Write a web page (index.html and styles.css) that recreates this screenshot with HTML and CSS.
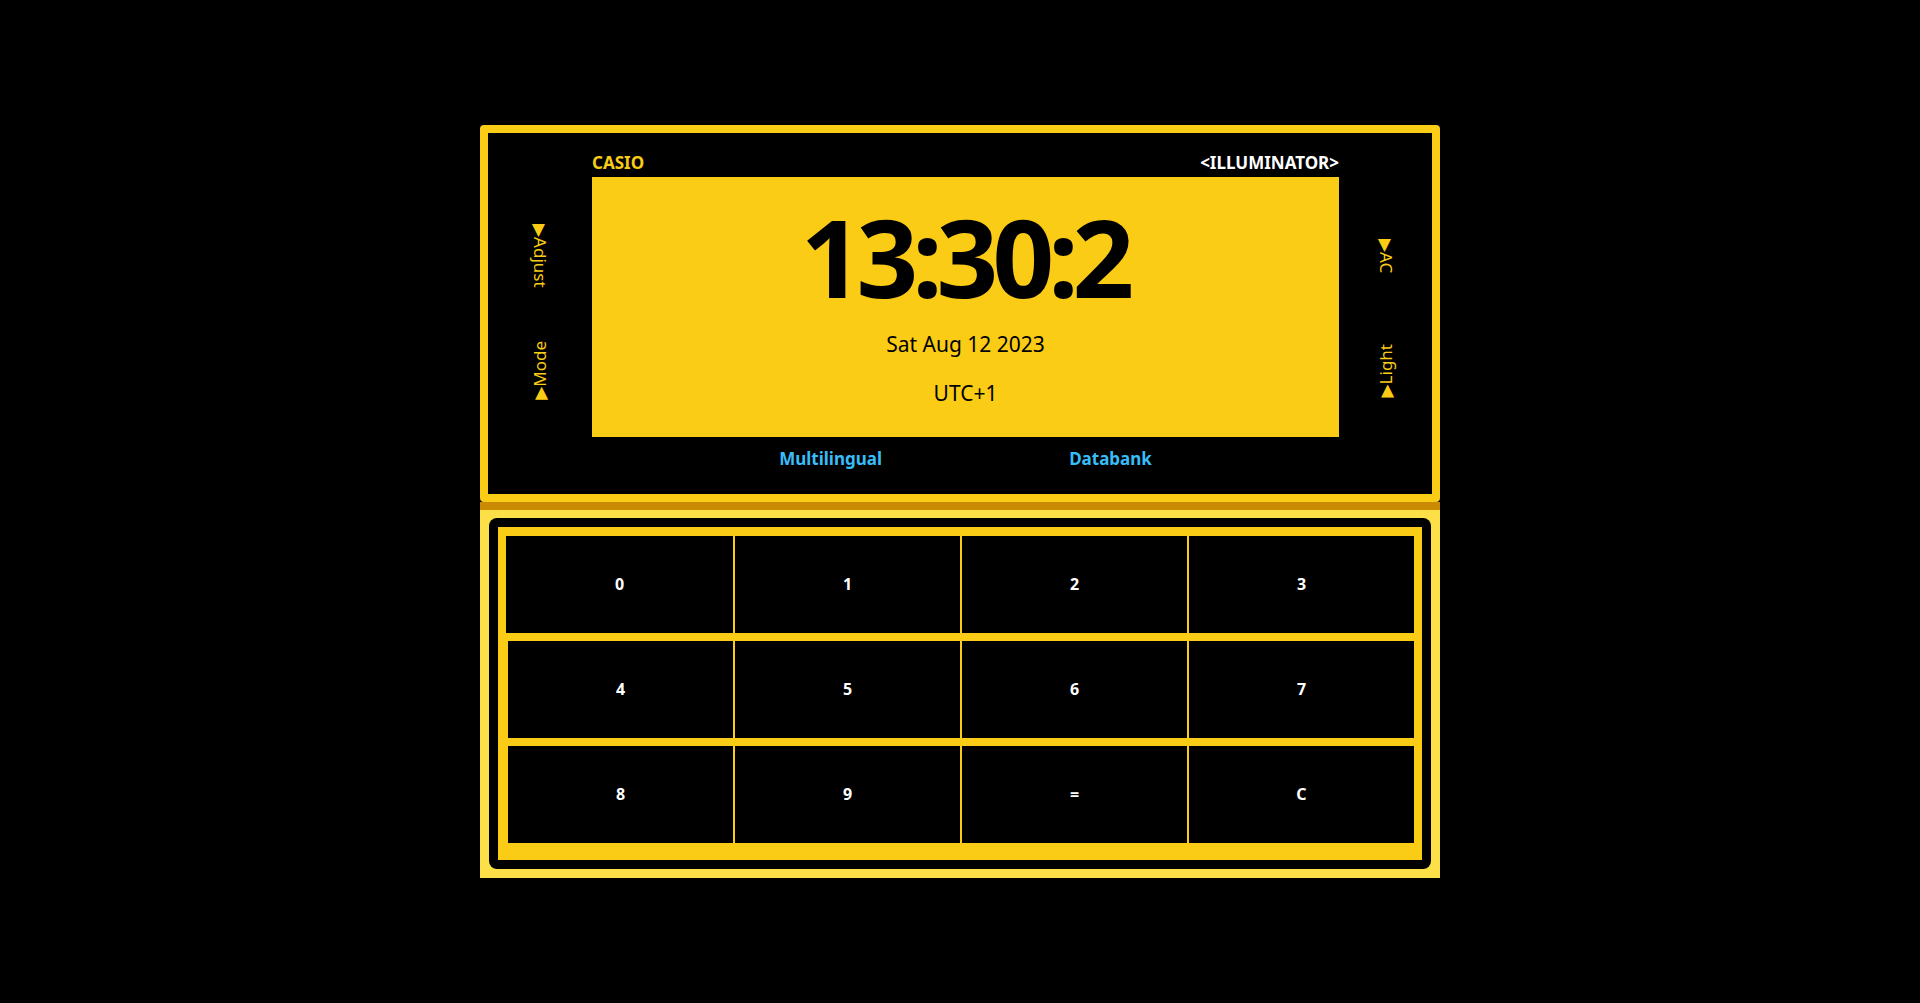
FILE: index.html
```html
<!DOCTYPE html>
<html lang="en">
<head>
<meta charset="utf-8">
<title>Casio Illuminator</title>
<link rel="stylesheet" href="styles.css">
</head>
<body>
<main class="watch">
  <section class="face">
    <div class="side side-left">
      <div class="slot"><span class="lbl lbl-down">▶Adjust</span></div>
      <div class="slot"><span class="lbl lbl-up">▶Mode</span></div>
    </div>
    <div class="center">
      <div class="brand-row">
        <span class="brand">CASIO</span>
        <span class="model">&lt;ILLUMINATOR&gt;</span>
      </div>
      <div class="lcd">
        <div class="time">13:30:2</div>
        <div class="date">Sat Aug 12 2023</div>
        <div class="zone">UTC+1</div>
      </div>
      <div class="feature-row">
        <span class="feature">Multilingual</span>
        <span class="feature">Databank</span>
      </div>
    </div>
    <div class="side side-right">
      <div class="slot"><span class="lbl lbl-down">▶AC</span></div>
      <div class="slot"><span class="lbl lbl-up">▶Light</span></div>
    </div>
  </section>
  <section class="pad">
    <div class="pad-frame">
      <div class="keys">
        <div class="row row-first">
          <button class="key">0</button>
          <button class="key">1</button>
          <button class="key">2</button>
          <button class="key">3</button>
        </div>
        <div class="row">
          <button class="key">4</button>
          <button class="key">5</button>
          <button class="key">6</button>
          <button class="key">7</button>
        </div>
        <div class="row">
          <button class="key">8</button>
          <button class="key">9</button>
          <button class="key">=</button>
          <button class="key">C</button>
        </div>
      </div>
    </div>
  </section>
</main>
</body>
</html>
```

FILE: styles.css
```css
* { box-sizing: border-box; }
html, body { margin: 0; padding: 0; }
body {
  background: #000;
  min-height: 100vh;
  display: flex;
  align-items: center;
  justify-content: center;
  font-family: "Noto Sans", "Open Sans", "DejaVu Sans", sans-serif;
}
.watch {
  width: 960px;
  display: flex;
  flex-direction: column;
}
.face {
  background: #000;
  border: 8px solid #facc15;
  border-radius: 4px;
  display: flex;
}
.side {
  display: flex;
  flex-direction: column;
  padding-top: 73px;
  gap: 14.5px;
}
.side-left { width: 104px; }
.side-right { width: 93px; }
.slot {
  height: 100px;
  display: flex;
  align-items: center;
  justify-content: center;
}
.lbl {
  color: #facc15;
  font-size: 17px;
  line-height: 20px;
  writing-mode: vertical-rl;
  text-orientation: sideways;
  white-space: nowrap;
}
.lbl-up { transform: rotate(180deg); }
.center {
  width: 747px;
  padding-top: 20px;
  padding-bottom: 25px;
}
.brand-row {
  height: 20px;
  margin-bottom: 4px;
  display: flex;
  justify-content: space-between;
  font-size: 17px;
  line-height: 20px;
  font-weight: 700;
}
.brand { color: #facc15; }
.model { color: #fff; }
.lcd {
  height: 260px;
  background: #facc15;
  color: #000;
  display: flex;
  flex-direction: column;
  align-items: center;
  padding-top: 26px;
}
.time {
  font-size: 108px;
  line-height: 108px;
  font-weight: 700;
  letter-spacing: -6px;
  padding-right: 2px;
}
.date {
  margin-top: 21px;
  font-size: 21px;
  line-height: 24px;
}
.zone {
  margin-top: 25px;
  font-size: 21px;
  line-height: 24px;
}
.feature-row {
  margin-top: 12px;
  height: 20px;
  display: flex;
  justify-content: space-evenly;
}
.feature {
  color: #38bdf8;
  font-size: 17px;
  line-height: 20px;
  font-weight: 700;
}
.pad {
  background: #fde047;
  border-top: 8px solid #ca8a04;
  padding: 8px 9px 9px 9px;
}
.pad-frame {
  background: #000;
  border-radius: 8px;
  padding: 9px;
}
.keys {
  background: #facc15;
  padding: 9px 8px 17px 10px;
  display: flex;
  flex-direction: column;
  gap: 8px;
}
.row {
  height: 97px;
  display: grid;
  grid-template-columns: repeat(4, 1fr);
  gap: 2px;
}
.row-first { margin-left: -2px; grid-template-columns: 227px 1fr 1fr 1fr; }
.key {
  background: #000;
  border: 0;
  margin: 0;
  padding: 0 0 2px 0;
  color: #fff;
  font-family: inherit;
  font-size: 16px;
  font-weight: 700;
  cursor: pointer;
}
```
